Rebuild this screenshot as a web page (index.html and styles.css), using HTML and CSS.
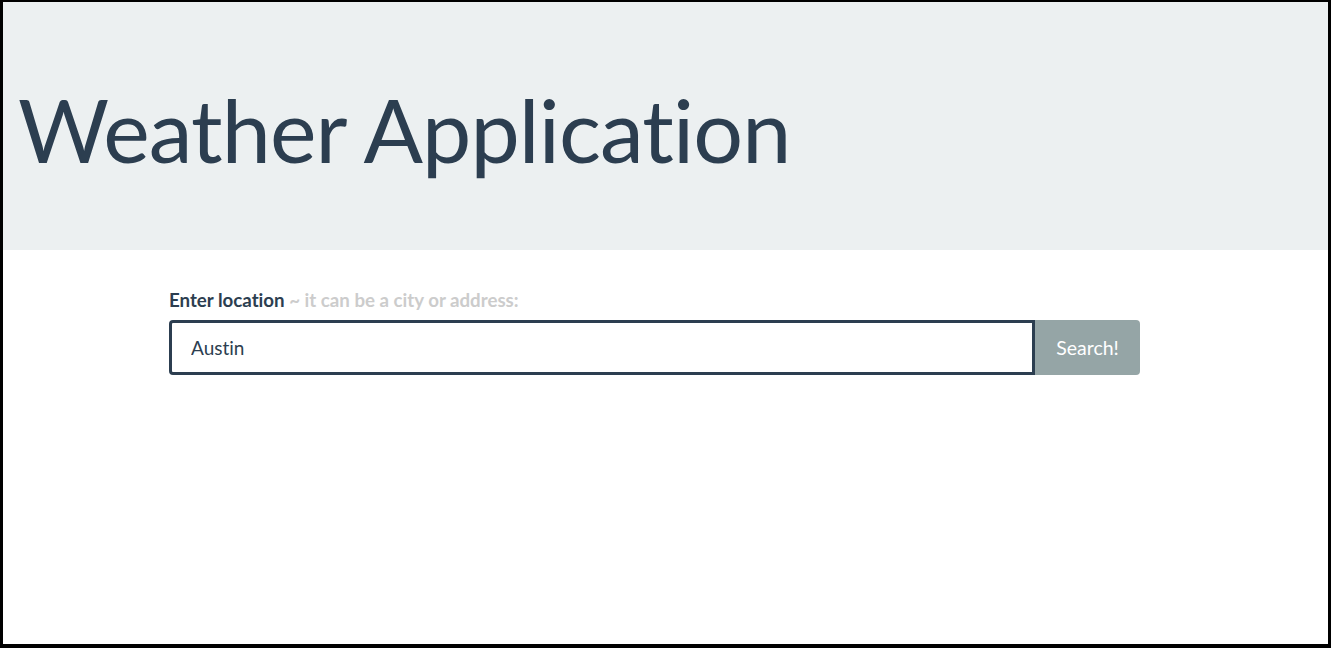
FILE: index.html
```html
<!DOCTYPE html>
<html lang="en">
<head>
<meta charset="utf-8">
<title>Weather Application</title>
<link rel="stylesheet" href="styles.css">
</head>
<body>
<div class="frame">
  <header class="jumbotron">
    <h1 class="title">Weather Application</h1>
  </header>
  <main class="content">
    <form class="search-form" onsubmit="return false;">
      <label class="label" for="location">Enter location <span class="hint">~ it can be a city or address:</span></label>
      <div class="input-group">
        <input id="location" class="location-input" type="text" value="Austin" autofocus>
        <button class="search-btn" type="submit">Search!</button>
      </div>
    </form>
  </main>
</div>
</body>
</html>
```

FILE: styles.css
```css
* { box-sizing: border-box; }
html, body { margin: 0; padding: 0; }
body {
  font-family: Lato, "Open Sans", sans-serif;
  font-variant-ligatures: none;
  color: #2c3e50;
  background: #fff;
}
.frame {
  height: 648px;
  border-style: solid;
  border-color: #000;
  border-width: 2px 3px 4px 3px;
  display: flex;
  flex-direction: column;
}
.jumbotron {
  background: #ecf0f1;
  padding: 75px 15px 0 15px;
  height: 248px;
}
.title {
  margin: 0;
  font-size: 88px;
  font-weight: 400;
  letter-spacing: -0.9px;
  line-height: 1.2;
  color: #2c3e50;
}
.content {
  padding: 36px 0 0 166px;
}
.search-form {
  width: 971px;
  display: flex;
  flex-direction: column;
}
.label {
  font-size: 18.7px;
  font-weight: 700;
  line-height: 1.5;
  margin-bottom: 6px;
}
.hint { color: #cccccc; }
.input-group {
  display: flex;
  height: 55px;
}
.location-input {
  flex: 1;
  min-width: 0;
  font-family: inherit;
  font-variant-ligatures: none;
  font-size: 19px;
  color: #2c3e50;
  caret-color: #2c3e50;
  border: 3px solid #2c3e50;
  border-radius: 4px 0 0 4px;
  padding: 0 19px;
  outline: none;
  background: #fff;
}
.search-btn {
  width: 105px;
  font-family: inherit;
  font-size: 19.5px;
  color: #fff;
  background: #95a5a6;
  border: none;
  border-radius: 0 4px 4px 0;
  padding: 0;
}
```
